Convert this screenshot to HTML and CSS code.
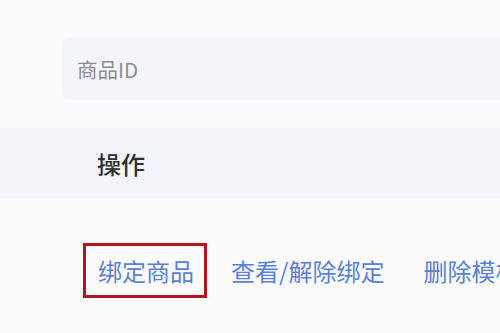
FILE: index.html
```html
<!DOCTYPE html>
<html>
<head>
<meta charset="utf-8">
<link rel="stylesheet" href="styles.css">
</head>
<body>
<div class="page">
  <div class="search">
    <div class="input">商品ID</div>
  </div>
  <div class="thead">
    <div class="th">操作</div>
  </div>
  <div class="row">
    <span class="link boxed">绑定商品</span>
    <span class="link">查看/解除绑定</span>
    <span class="link">删除模板</span>
  </div>
</div>
</body>
</html>
```
FILE: styles.css
```css
html, body {
  margin: 0;
  padding: 0;
  background: #fcfcfe;
}
.page {
  width: 500px;
  height: 333px;
  overflow: hidden;
  font-family: "Noto Sans CJK SC", "Noto Sans", sans-serif;
}
.search {
  padding: 38px 0 0 62px;
  height: 62px;
}
.input {
  height: 62px;
  background: #f4f5f9;
  border-radius: 7px 0 0 7px;
  padding-left: 15px;
  display: flex;
  align-items: center;
  font-size: 20.5px;
  color: #8c8d92;
}
.thead {
  margin-top: 28px;
  height: 70px;
  background: #f3f5fb;
  display: flex;
  align-items: center;
  padding-left: 97px;
}
.th {
  font-size: 24px;
  color: #2f3033;
  font-weight: 500;
}
.row {
  margin-top: 45px;
  padding-left: 83px;
  display: flex;
  align-items: center;
  gap: 24px;
  white-space: nowrap;
}
.link {
  font-size: 24px;
  color: #5a7fd6;
  line-height: 49px;
}
.boxed {
  border: 3px solid #b3141d;
  padding: 0 10px 0 12px;
}
.link + .link {
  margin-right: 15px;
}
```
